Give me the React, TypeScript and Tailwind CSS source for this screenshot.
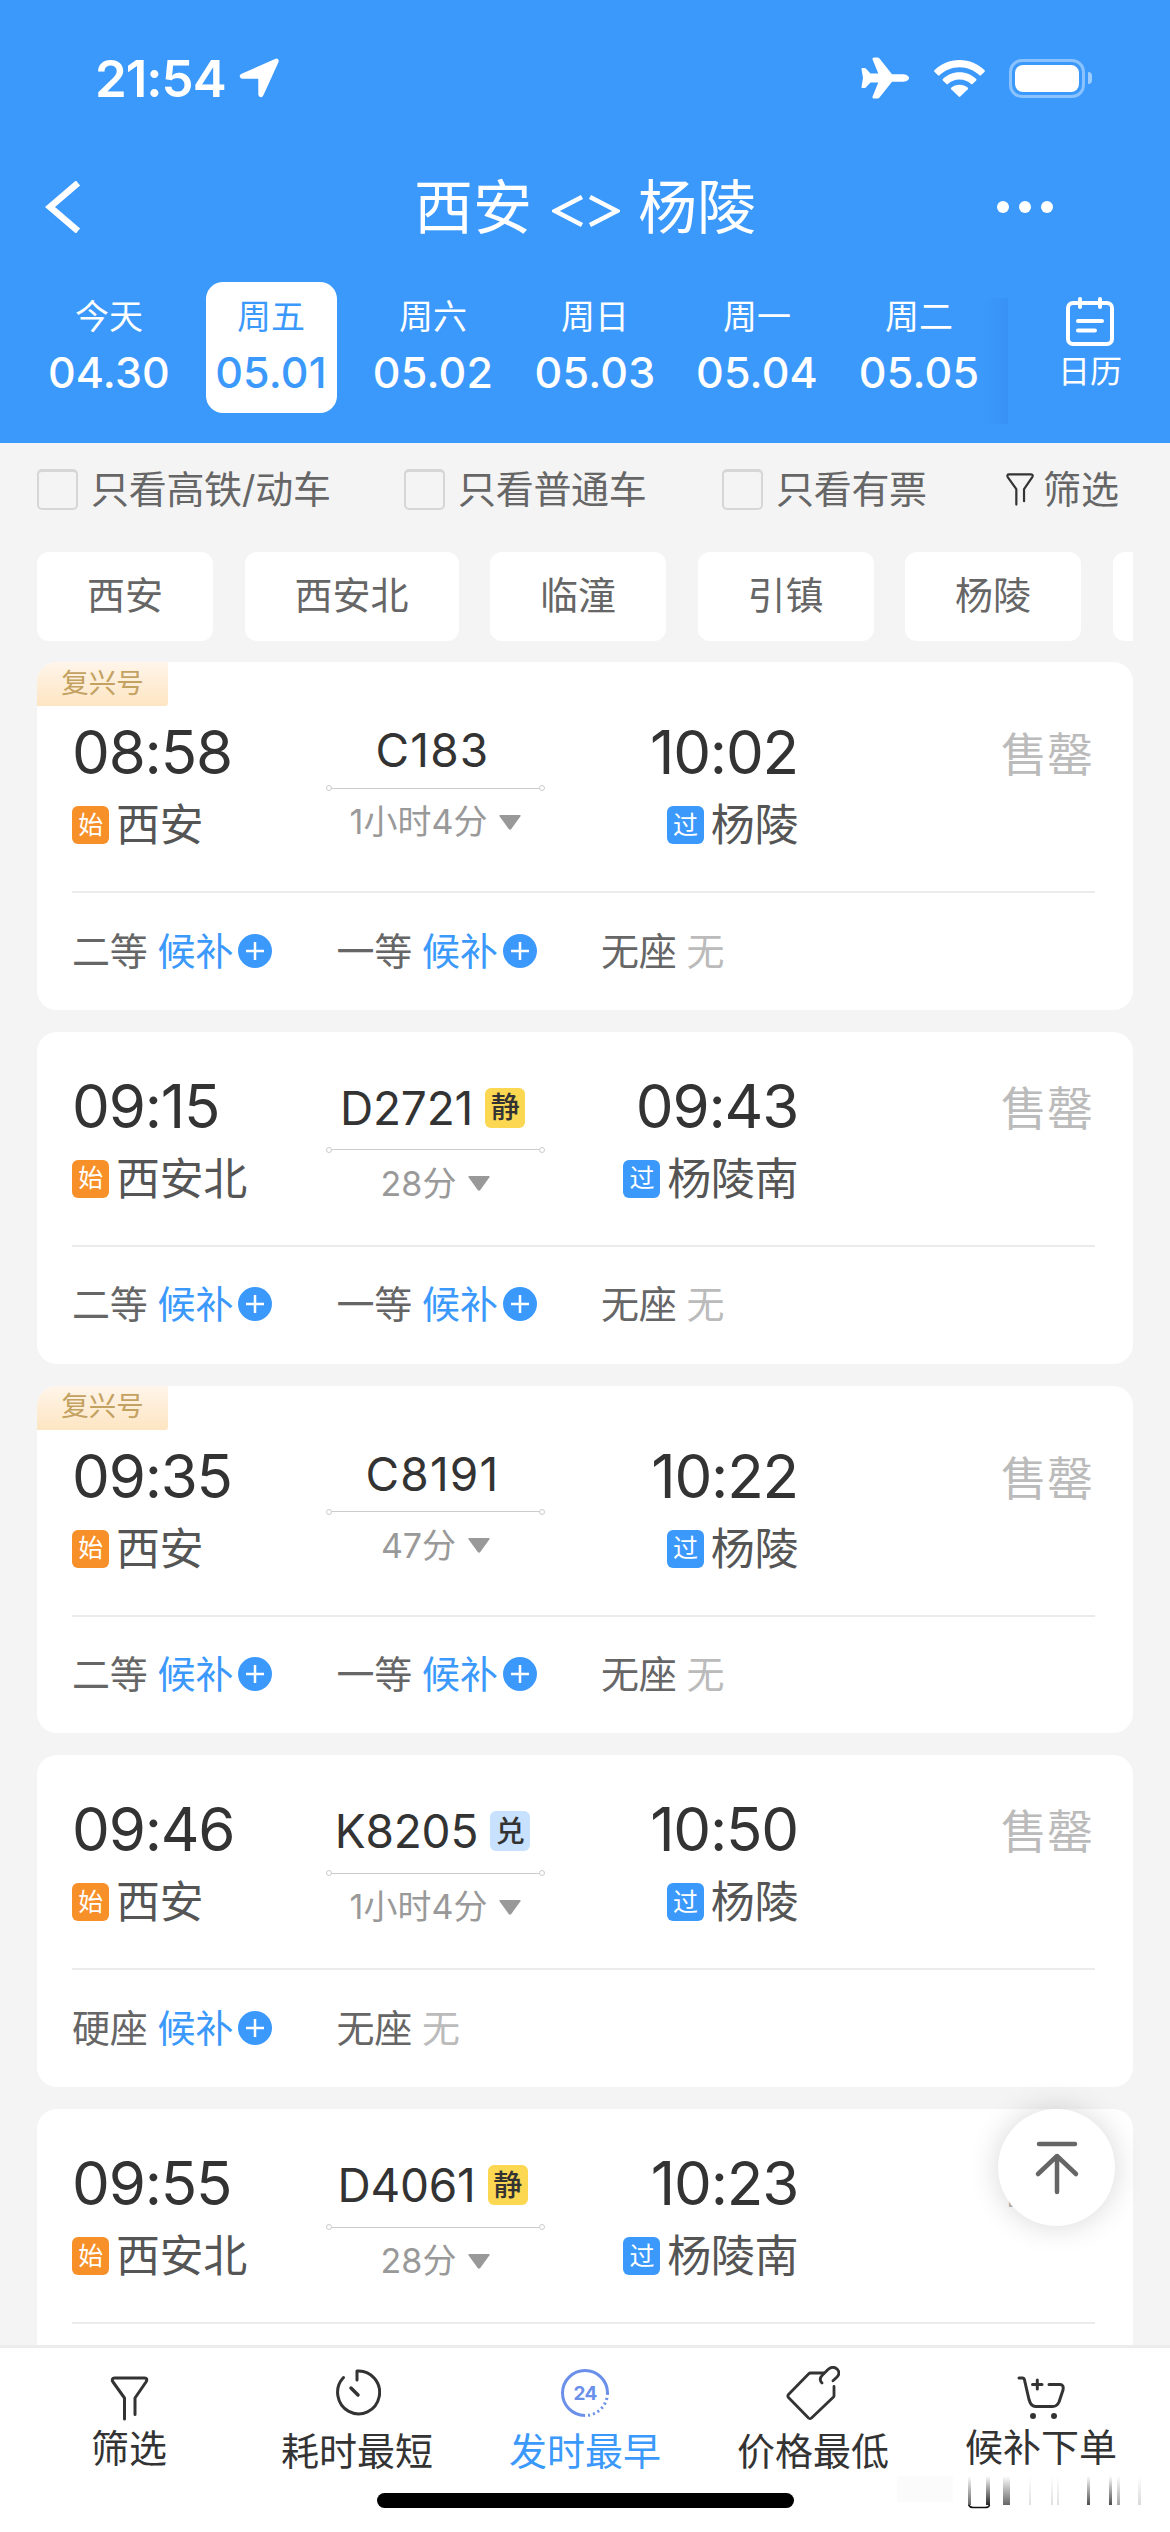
import { useState } from "react";

const dates = [
  { day: "今天", date: "04.30" },
  { day: "周五", date: "05.01" },
  { day: "周六", date: "05.02" },
  { day: "周日", date: "05.03" },
  { day: "周一", date: "05.04" },
  { day: "周二", date: "05.05" },
];

const stations = ["西安", "西安北", "临潼", "引镇", "杨陵"];

type Seat = { name: string; waitlist: boolean };

type Train = {
  no: string;
  badge?: "静" | "兑";
  fuxing?: boolean;
  depart: string;
  arrive: string;
  from: string;
  to: string;
  duration: string;
  seats: Seat[];
};

const emuSeats: Seat[] = [
  { name: "二等", waitlist: true },
  { name: "一等", waitlist: true },
  { name: "无座", waitlist: false },
];

const trains: Train[] = [
  { no: "C183", fuxing: true, depart: "08:58", arrive: "10:02", from: "西安", to: "杨陵", duration: "1小时4分", seats: emuSeats },
  { no: "D2721", badge: "静", depart: "09:15", arrive: "09:43", from: "西安北", to: "杨陵南", duration: "28分", seats: emuSeats },
  { no: "C8191", fuxing: true, depart: "09:35", arrive: "10:22", from: "西安", to: "杨陵", duration: "47分", seats: emuSeats },
  {
    no: "K8205",
    badge: "兑",
    depart: "09:46",
    arrive: "10:50",
    from: "西安",
    to: "杨陵",
    duration: "1小时4分",
    seats: [
      { name: "硬座", waitlist: true },
      { name: "无座", waitlist: false },
    ],
  },
  { no: "D4061", badge: "静", depart: "09:55", arrive: "10:23", from: "西安北", to: "杨陵南", duration: "28分", seats: [] },
];

const FunnelIcon = ({ className }: { className: string }) => (
  <svg className={className} viewBox="0 0 38 45" fill="none" stroke="currentColor" strokeWidth="3" strokeLinecap="round" strokeLinejoin="round">
    <path d="M14 43V22L2.500 6C1 3.500 2 2 4 2H34C36.500 2 37 3.500 35.500 6L24.500 22V38.500" />
  </svg>
);

const StatusBar = () => (
  <div className="flex h-[156px] items-center justify-between pr-[78px] pl-[95px]">
    <div className="flex items-center gap-[13px]">
      <span className="text-[51px] leading-none font-semibold tracking-[-1px]">21:54</span>
      <svg className="h-10 w-10" viewBox="0 0 40 40" fill="currentColor" stroke="currentColor" strokeWidth="2" strokeLinejoin="round">
        <path d="M36.500 1.800C38 1.100 39.200 2.200 38.500 3.800L23.500 36.800C22.500 39 20.300 38.300 20.300 36.300V21.200Q20.300 19.700 18.800 19.700H3.700C1.500 19.700 1 17.500 3 16.700Z" />
      </svg>
    </div>
    <div className="flex items-center">
      <svg className="h-[42px] w-[48px]" viewBox="0 0 48 42" fill="currentColor">
        <path d="M48 21C48 18.800 45 17.200 41 17.200H31L18.500 1.600Q17.700 0.600 16.500 0.600H13.500Q10.800 0.600 11.600 2.600L17.300 16.500H9.500L4.800 11.600Q4.200 11 3.300 11H1.300Q0.300 11 0.500 12L2 21L0.500 30Q0.300 31 1.300 31H3.300Q4.200 31 4.800 30.400L9.500 25.500H17.300L11.600 39.400Q10.800 41.400 13.500 41.400H16.500Q17.700 41.400 18.500 40.400L31 24.800H41C45 24.800 48 23.200 48 21Z" />
      </svg>
      <svg className="ml-[25px] h-[37px] w-[51px]" viewBox="0 0 51 37" fill="currentColor">
        <path d="M25.500 0C35.300 0 44.200 3.900 50.600 10.200Q51.300 11 50.600 11.700L47 15.300Q46.300 16 45.500 15.300C40.200 10.300 33.200 7.300 25.500 7.300S10.800 10.300 5.500 15.300Q4.700 16 4 15.300L0.400 11.700Q-0.300 11 0.400 10.200C6.800 3.900 15.700 0 25.500 0Z" />
        <path d="M25.500 12.300C32 12.300 37.900 14.800 42.200 19Q42.900 19.700 42.200 20.400L38.500 24.100Q37.800 24.700 37.100 24.100C34 21.300 30 19.600 25.500 19.600S17 21.300 13.900 24.100Q13.200 24.700 12.500 24.100L8.800 20.400Q8.100 19.700 8.800 19C13.100 14.800 19 12.300 25.500 12.300Z" />
        <path d="M25.500 24.700C28.700 24.700 31.600 25.900 33.800 27.800Q34.500 28.500 33.800 29.200L26.300 36.600Q25.500 37.300 24.700 36.600L17.200 29.200Q16.500 28.500 17.200 27.800C19.400 25.900 22.300 24.700 25.500 24.700Z" />
      </svg>
      <div className="ml-[24px] flex h-[39px] w-[76px] rounded-[13px] border-[3px] border-white/40 p-[3px]">
        <div className="flex-1 rounded-[8px] bg-white" />
      </div>
      <div className="ml-[3px] h-3 w-[4px] rounded-r-full bg-white/50" />
    </div>
  </div>
);

const DateTabs = () => {
  const [selected, setSelected] = useState(1);

  return (
    <div className="flex h-[131px] pl-7">
      {dates.map((item, index) => (
        <div key={item.date} className="flex w-[162px] shrink-0 justify-center">
          <button
            className={`flex w-[131px] flex-col items-center rounded-[17px] pt-3 ${
              index === selected ? "bg-white text-[#3b99fc]" : "text-white"
            }`}
            onClick={() => setSelected(index)}
          >
            <span className="text-[34px] leading-[46px]">{item.day}</span>
            <span className="mt-[7px] text-[43px] leading-[50px] font-medium tracking-[0.2px]">{item.date}</span>
          </button>
        </div>
      ))}
      <div className="mt-4 -ml-4 h-[126px] w-6 shrink-0 bg-gradient-to-r from-[#3b99fc] to-[#3792f3]" />
      <div className="flex flex-1 flex-col items-center pt-[15px] pl-[2px]">
        <svg className="h-[50px] w-[48px]" viewBox="0 0 48 50" fill="none" stroke="currentColor" strokeWidth="4" strokeLinecap="round">
          <rect x="2" y="6" width="44" height="41" rx="5" />
          <path d="M14 2V10M34 2V10M12 24H36M12 33.500H29" />
        </svg>
        <span className="mt-[5px] text-[32px] leading-[40px]">日历</span>
      </div>
    </div>
  );
};

const CheckOption = ({ label }: { label: string }) => {
  const [checked, setChecked] = useState(false);

  return (
    <button className="flex items-center gap-[13px]" onClick={() => setChecked(!checked)}>
      <span
        className={`h-[41px] w-[41px] rounded-[5px] border-2 border-t-[3px] border-[#d6d6d6] ${checked ? "bg-[#3b99fc]" : "bg-[#f4f4f4]"}`}
      />
      <span className="tracking-[-0.3px]">{label}</span>
    </button>
  );
};

const Header = () => (
  <header className="h-[443px] bg-[#3b99fc] text-white">
    <StatusBar />
    <div className="flex h-[126px] items-center justify-between pb-6 pr-[117px] pl-[45px]">
      <svg className="h-[52px] w-[128px]" viewBox="0 0 128 52" fill="none" stroke="currentColor" strokeWidth="6.500">
        <path d="M33 2L5 26L33 50" />
      </svg>
      <h1 className="flex items-center text-[59px] leading-none">
        西安
        <svg className="mt-2 mr-[18px] ml-[20px] h-8 w-[68px]" viewBox="0 0 68 32" fill="none" stroke="currentColor" strokeWidth="4.500">
          <path d="M30 2L3 16L30 30M38 2L65 16L38 30" />
        </svg>
        杨陵
      </h1>
      <div className="flex w-14 justify-between">
        <span className="h-3 w-3 rounded-full bg-white" />
        <span className="h-3 w-3 rounded-full bg-white" />
        <span className="h-3 w-3 rounded-full bg-white" />
      </div>
    </div>
    <DateTabs />
  </header>
);

const Filters = () => (
  <div className="flex h-[93px] items-center pl-[37px] text-[38px] text-[#666]">
    <div className="w-[367px]">
      <CheckOption label="只看高铁/动车" />
    </div>
    <div className="w-[318px]">
      <CheckOption label="只看普通车" />
    </div>
    <div className="w-[283px]">
      <CheckOption label="只看有票" />
    </div>
    <button className="flex items-center gap-[8px]">
      <FunnelIcon className="h-[33px] w-[30px] text-[#333]" />
      筛选
    </button>
  </div>
);

const StationChips = () => (
  <div className="mx-[37px] mt-[16px] flex gap-[31.5px] overflow-hidden">
    {stations.map((name) => (
      <button key={name} className="h-[89px] shrink-0 rounded-[12px] bg-white px-[50px] pb-1 text-[38px] leading-none text-[#666]">
        {name}
      </button>
    ))}
    <span className="h-[89px] w-[60px] shrink-0 rounded-[12px] bg-white" />
  </div>
);

const StopTag = ({ type }: { type: "始" | "过" }) => (
  <span
    className={`flex h-[38px] w-[37px] items-center justify-center rounded-[6px] text-[25px] leading-none text-white ${
      type === "始" ? "bg-[#f79028]" : "bg-[#3b99fc]"
    }`}
  >
    {type}
  </span>
);

const TrainCard = ({ train }: { train: Train }) => (
  <div className={`overflow-hidden rounded-[20px] bg-white ${train.fuxing ? "h-[347.600px]" : "h-[332px]"}`}>
    {train.fuxing && (
      <div className="-mb-7 flex h-[44px] w-[131px] items-center justify-center rounded-br-[3px] bg-gradient-to-b from-[#fff5ea] to-[#fde5c2] pb-[1px] text-[27.500px] leading-none text-[#c3a160]">
        复兴号
      </div>
    )}
    <div className="mr-[38px] ml-[35px] flex h-[215px] border-b-2 border-[#ebebeb] pt-[43px]">
      <div className="w-[254px]">
        <div className="text-[60px] leading-[62px] tracking-[-1.2px] text-[#333]">{train.depart}</div>
        <div className="mt-[15px] flex items-center gap-[7px] text-[44px] leading-[54px] tracking-[-0.4px] text-[#555]">
          <StopTag type="始" />
          {train.from}
        </div>
      </div>
      <div className="flex w-[219px] flex-col items-center">
        <div
          className={`mr-[6px] flex items-center justify-center gap-3 text-[46px] leading-none text-[#333] ${
            train.badge ? "h-[66px] tracking-[-0.2px]" : "h-[58px] tracking-[1.2px]"
          }`}
        >
          {train.no}
          {train.badge && (
            <span
              className={`flex h-10 w-10 items-center justify-center rounded-[6px] text-[29px] leading-none font-medium ${
                train.badge === "静" ? "bg-[#fcd752]" : "bg-[#c8e1fe]"
              }`}
            >
              {train.badge}
            </span>
          )}
        </div>
        <div className="mt-[6px] flex w-full items-center">
          <span className="h-[6px] w-[6px] rounded-full border border-[#ccc]" />
          <span className="h-px flex-1 bg-[#ccc]" />
          <span className="h-[6px] w-[6px] rounded-full border border-[#ccc]" />
        </div>
        <div className="mt-[8px] flex items-center gap-[12px] text-[34px] leading-[46px] text-[#999]">
          {train.duration}
          <svg className="h-[15px] w-[22px]" viewBox="0 0 22 15" fill="currentColor">
            <path d="M1.500 0H20.500Q22.500 0 21.300 1.600L12.300 14Q11 15.600 9.700 14L0.700 1.600Q-0.500 0 1.500 0Z" />
          </svg>
        </div>
      </div>
      <div className="flex w-[253px] flex-col items-end">
        <div className="text-[60px] leading-[62px] tracking-[-1.2px] text-[#333]">{train.arrive}</div>
        <div className="mt-[15px] flex items-center gap-[7px] text-[44px] leading-[54px] tracking-[-0.4px] text-[#555]">
          <StopTag type="过" />
          {train.to}
        </div>
      </div>
      <div className="flex-1 pt-[2px] pr-[2px] text-right text-[46px] leading-[62px] text-[#bbb]">售罄</div>
    </div>
    <div className="ml-[35px] flex h-[115px] items-center text-[38px] leading-none tracking-[-0.2px]">
      {train.seats.map((seat) => (
        <div key={seat.name} className="flex w-[264.500px] items-center">
          <span className="mr-[10px] text-[#666]">{seat.name}</span>
          {seat.waitlist ? (
            <>
              <span className="text-[#3b99fc]">候补</span>
              <svg className="ml-[5px] h-[34px] w-[34px]" viewBox="0 0 34 34">
                <circle cx="17" cy="17" r="17" fill="#3b99fc" />
                <path d="M8 17H26M17 8V26" stroke="#fff" strokeWidth="2.500" />
              </svg>
            </>
          ) : (
            <span className="text-[#bbb]">无</span>
          )}
        </div>
      ))}
    </div>
  </div>
);

const ClockIcon = () => (
  <svg className="h-12 w-12" viewBox="0 0 48 48" fill="none" stroke="currentColor" strokeWidth="3" strokeLinecap="round" strokeLinejoin="round">
    <path d="M10.500 9.500A21 21.500 0 1 0 24 3V12" />
    <path d="M18 20L25 27" strokeWidth="3.500" />
  </svg>
);

const Clock24Icon = () => (
  <svg className="h-12 w-12" viewBox="0 0 48 48" fill="none" stroke="#6b90ea" strokeWidth="3">
    <path d="M24 46.500A22.500 22.500 0 1 1 46.500 24" />
    <path d="M46.500 24A22.500 22.500 0 0 1 24 46.500" strokeDasharray="2 3" />
    <text x="24" y="31" textAnchor="middle" fontSize="19" fontWeight="700" letterSpacing="-0.8" fill="#6b90ea" stroke="none">
      24
    </text>
  </svg>
);

const PriceTagIcon = () => (
  <svg className="h-[54px] w-[54px]" viewBox="0 0 54 54" fill="none" stroke="currentColor" strokeWidth="2.800" strokeLinecap="round" strokeLinejoin="round">
    <path d="M38 7H24.500Q23.500 7 22.500 8L2.500 28.500Q1.200 30 2.500 31.500L22.500 52Q24 53.200 25.500 52L47.500 31Q48 30.500 48 29.500V20.500" />
    <path d="M36 17C33.500 14.500 34 11.500 36.500 9L42 3.500C45.500 0.500 49 1 51.500 3.500C53.500 6 53 9 51 11L47 14.800" />
  </svg>
);

const CartIcon = () => (
  <svg className="h-[44px] w-[48px]" viewBox="0 0 48 44" fill="none" stroke="currentColor" strokeWidth="3" strokeLinecap="round" strokeLinejoin="round">
    <path d="M2 2H5.500Q7 2 7.500 4L12 23.500Q14 30.500 18.500 30.500H35.500Q40 30.500 42 26L46 14Q47 8.500 43 8.500H32" />
    <path d="M15.500 8.500H25M20.300 4V13" />
    <circle cx="16" cy="40" r="3" fill="currentColor" stroke="none" />
    <circle cx="37" cy="40" r="3" fill="currentColor" stroke="none" />
  </svg>
);

const BottomBar = () => {
  const tabs = [
    { label: "筛选", icon: <FunnelIcon className="h-[45px] w-[39px]" />, className: "pt-[28px] text-[#333]", labelClass: "mt-[3px]" },
    { label: "耗时最短", icon: <ClockIcon />, className: "pt-[20px] text-[#333]", labelClass: "mt-[11px]" },
    { label: "发时最早", icon: <Clock24Icon />, className: "pt-[21px] text-[#3b99fc]", labelClass: "mt-[10px]" },
    { label: "价格最低", icon: <PriceTagIcon />, className: "pt-[18px] text-[#333]", labelClass: "mt-[7px]" },
    { label: "候补下单", icon: <CartIcon />, className: "pt-[28px] text-[#333]", labelClass: "mt-[3px]" },
  ];

  return (
    <nav className="relative h-[187px] border-t-[3px] border-[#ececec] bg-white">
      <div className="flex h-[145px] px-[15px]">
        {tabs.map((tab) => (
          <button key={tab.label} className={`flex w-[228px] flex-col items-center ${tab.className}`}>
            {tab.icon}
            <span className={`text-[38px] leading-[48px] ${tab.labelClass}`}>{tab.label}</span>
          </button>
        ))}
      </div>
      <div className="mx-auto h-[15px] w-[417px] rounded-full bg-black" />
      <Streaks />
    </nav>
  );
};

// faded strokes in the bottom right corner
const streaks = [
  { x: 73, w: 3, o: 0.6 },
  { x: 91, w: 4, o: 0.85 },
  { x: 108, w: 7, o: 0.6 },
  { x: 134, w: 2, o: 0.12 },
  { x: 156, w: 2, o: 0.12 },
  { x: 162, w: 2, o: 0.12 },
  { x: 192, w: 3, o: 0.7 },
  { x: 214, w: 3, o: 0.7 },
  { x: 222, w: 3, o: 0.35 },
  { x: 243, w: 3, o: 0.15 },
];

const Streaks = () => (
  <svg className="absolute top-[126px] left-[895px] h-9 w-[250px]" viewBox="0 0 250 36">
    <defs>
      <linearGradient id="fade" x1="0" y1="0" x2="0" y2="1">
        <stop offset="0" stopColor="#000" stopOpacity="0" />
        <stop offset="1" stopColor="#000" />
      </linearGradient>
    </defs>
    <rect x="2" y="2" width="56" height="26" fill="#fbfbfb" />
    {streaks.map((s) => (
      <rect key={s.x} x={s.x} y="2" width={s.w} height="29" fill="url(#fade)" opacity={s.o} />
    ))}
    <path d="M73.500 31Q75 33.500 78 33.500H90Q94 33.500 94.500 31" fill="none" stroke="#111" strokeWidth="1.500" />
  </svg>
);

const App = () => {
  return (
    <div className="relative flex h-[2532px] w-[1170px] flex-col overflow-hidden bg-[#f4f4f4] font-[Inter,'Noto_Sans_CJK_SC',sans-serif]">
      <Header />
      <Filters />
      <StationChips />
      <main className="mx-[37px] mt-[21px] flex min-h-0 flex-1 flex-col gap-[22px] overflow-hidden">
        {trains.map((train) => (
          <div key={train.no} className="shrink-0">
            <TrainCard train={train} />
          </div>
        ))}
      </main>
      <BottomBar />
      <button className="absolute top-[2109px] left-[998px] flex h-[117px] w-[117px] items-center justify-center rounded-full bg-white shadow-[0_0_30px_rgba(0,0,0,0.16)]">
        <svg className="h-[54px] w-[46px]" viewBox="0 0 46 54" fill="none" stroke="#666" strokeWidth="4.500" strokeLinecap="round" strokeLinejoin="round">
          <path d="M5 3H41M23 51V15M4 33L23 15L42 33" />
        </svg>
      </button>
    </div>
  );
};

export default App;
